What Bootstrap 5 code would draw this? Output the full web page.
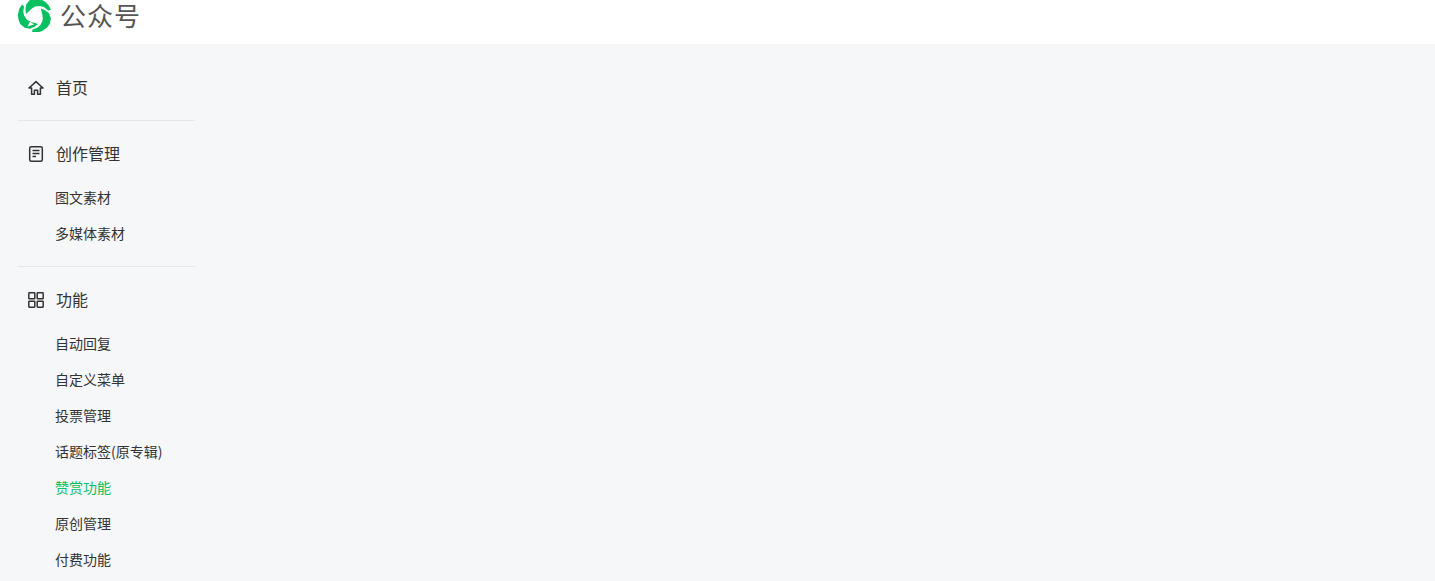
<!DOCTYPE html>
<html lang="zh-CN">

<head>
    <meta charset="UTF-8">
    <meta name="viewport" content="width=device-width, initial-scale=1.0">
    <title>公众号</title>
    <link href="https://cdn.jsdelivr.net/npm/bootstrap@5.3.0/dist/css/bootstrap.min.css" rel="stylesheet">
    <style>
        html, body { height: 100%; overflow: hidden; }
        body { background: #f6f7f9; font-family: "Noto Sans CJK SC", sans-serif; color: #333; }
        .top-bar { height: 44px; padding: 0 0 14px 18px; background: #fff; }
        .brand-text { margin-left: 8px; font-size: 26px; line-height: 26px; letter-spacing: 1px; color: #555; }
        .side-nav { width: 177px; margin-left: 18px; padding-top: 26px; }
        .nav-group { padding-bottom: 14px; margin-bottom: 15px; border-bottom: 1px solid #e4e6e9; }
        .nav-head { height: 36px; padding-left: 10px; font-size: 16px; color: #333; }
        .nav-head svg { margin-right: 12px; flex: none; }
        .nav-head span { margin-bottom: 2px; }
        .sub-list { margin-top: 8px; }
        .sub-item { display: block; height: 36px; padding-left: 37px; font-size: 14px; line-height: 34px; color: #333; text-decoration: none; white-space: nowrap; }
        .sub-item.is-on { color: #07c160; }
    </style>
</head>

<body>
    <header class="top-bar d-flex align-items-center">
        <svg width="34" height="34" viewBox="0 0 34 34" fill="#07c160">
            <g transform="translate(17 17.5)">
                <path id="swoosh" d="M-8.9 -1.6L-9.5 -5.5L-9 -10.7L-5.5 -15.2L0 -17A17 17 0 0 1 16 -5.8L13.3 -4.9L9.6 -8L5.5 -9.5L0 -9L-3.8 -6.5L-6.5 -3.8Z"/>
                <use href="#swoosh" transform="rotate(120)"/>
                <use href="#swoosh" transform="rotate(240)"/>
                <path d="M-5 6L-1 9L-7.5 11Z" fill="#fff"/>
            </g>
        </svg>
        <span class="brand-text">公众号</span>
    </header>

    <nav class="side-nav">
        <div class="nav-group">
            <div class="nav-head d-flex align-items-center">
                <svg width="16" height="16" viewBox="0 0 16 16" fill="none" stroke="#333" stroke-width="1.5">
                    <path d="M1 8L8 1.6L15 8H12.4V14.2H9.6V10.2H6.4V14.2H3.6V8Z" stroke-linejoin="round"/>
                </svg>
                <span>首页</span>
            </div>
        </div>

        <div class="nav-group">
            <div class="nav-head d-flex align-items-center">
                <svg width="16" height="16" viewBox="0 0 16 16" fill="none" stroke="#333" stroke-width="1.5">
                    <rect x="1.7" y="0.8" width="12.6" height="14.4" rx="1.5"/>
                    <path d="M4.5 4.5H11.5M4.5 7.5H11.5M4.5 10.5H8"/>
                </svg>
                <span>创作管理</span>
            </div>
            <div class="sub-list">
                <a class="sub-item" href="#">图文素材</a>
                <a class="sub-item" href="#">多媒体素材</a>
            </div>
        </div>

        <div class="nav-group">
            <div class="nav-head d-flex align-items-center">
                <svg width="16" height="16" viewBox="0 0 16 16" fill="none" stroke="#333" stroke-width="1.5">
                    <rect x="0.8" y="0.8" width="6" height="6" rx="0.6"/>
                    <rect x="9.2" y="0.8" width="6" height="6" rx="0.6"/>
                    <rect x="0.8" y="9.2" width="6" height="6" rx="0.6"/>
                    <rect x="9.2" y="9.2" width="6" height="6" rx="0.6"/>
                </svg>
                <span>功能</span>
            </div>
            <div class="sub-list">
                <a class="sub-item" href="#">自动回复</a>
                <a class="sub-item" href="#">自定义菜单</a>
                <a class="sub-item" href="#">投票管理</a>
                <a class="sub-item" href="#">话题标签(原专辑)</a>
                <a class="sub-item is-on" href="#">赞赏功能</a>
                <a class="sub-item" href="#">原创管理</a>
                <a class="sub-item" href="#">付费功能</a>
            </div>
        </div>
    </nav>

    <script src="https://cdn.jsdelivr.net/npm/bootstrap@5.3.0/dist/js/bootstrap.bundle.min.js"></script>
</body>

</html>
